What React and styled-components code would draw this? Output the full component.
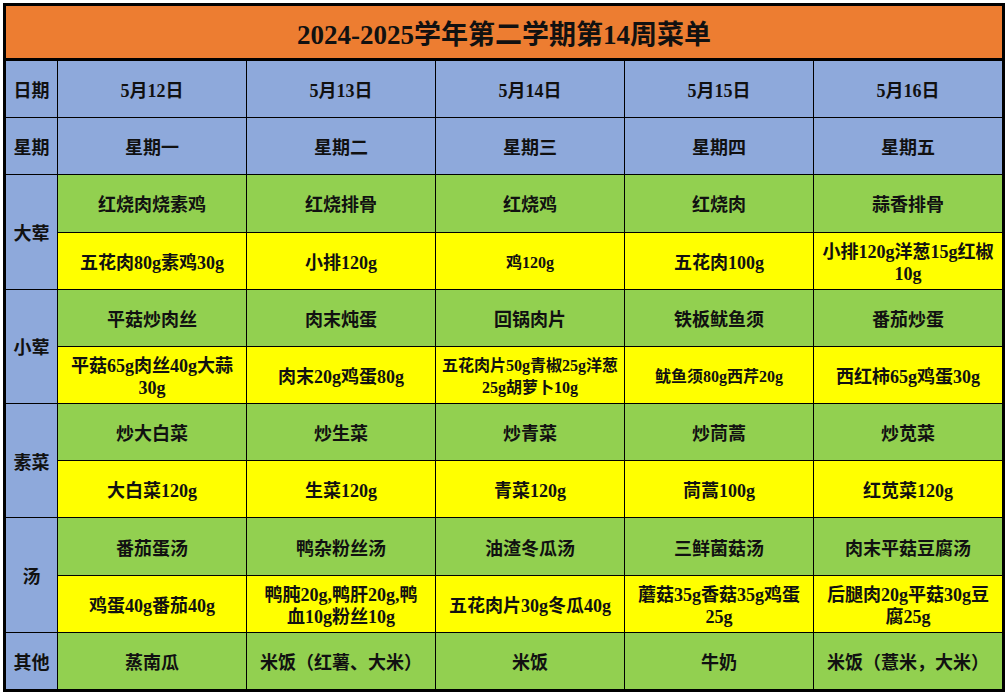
import styled, { createGlobalStyle } from "styled-components";

const GlobalStyle = createGlobalStyle`
  html, body {
    margin: 0;
    padding: 0;
    background: #ffffff;
  }
  body {
    font-family: "Liberation Serif", "Noto Sans CJK SC", serif;
  }
`;

const colors = {
  blue: "#8EA9DB",
  green: "#92D050",
  yellow: "#FFFF00",
};

const Frame = styled.div`
  box-sizing: border-box;
  width: 1002px;
  margin: 3px 0 0 3px;
  border: 3px solid #000;
  background: #000;
`;

const Title = styled.div`
  height: 52px;
  display: flex;
  align-items: center;
  justify-content: center;
  background: #ed7d31;
  border-bottom: 3px solid #000;
  font-family: "Liberation Serif", "Noto Sans CJK SC", serif;
  font-weight: 700;
  font-size: 27px;
  color: #111;
`;

const Grid = styled.div`
  display: grid;
  grid-template-columns: 51px repeat(5, 1fr);
  grid-template-rows: repeat(11, 1fr);
  gap: 1px;
  height: 628px;
  background: #000;
`;

const Cell = styled.div`
  box-sizing: border-box;
  display: flex;
  flex-direction: column;
  align-items: center;
  justify-content: center;
  padding-top: 4px;
  background: ${(p) => colors[p.$bg]};
  grid-row: ${(p) => (p.$span ? `span ${p.$span}` : "auto")};
  font-family: "Liberation Serif", "Noto Sans CJK SC", serif;
  font-weight: 700;
  font-size: ${(p) => (p.$small ? "16px" : "18px")};
  line-height: 22px;
  color: #111;
  text-align: center;
  white-space: nowrap;
  overflow: hidden;
`;

const Line = styled.span`
  display: block;
`;

const days = ["5月12日", "5月13日", "5月14日", "5月15日", "5月16日"];
const weekdays = ["星期一", "星期二", "星期三", "星期四", "星期五"];

const sections = [
  {
    label: "大荤",
    dishes: ["红烧肉烧素鸡", "红烧排骨", "红烧鸡", "红烧肉", "蒜香排骨"],
    portions: [
      { lines: ["五花肉80g素鸡30g"] },
      { lines: ["小排120g"] },
      { lines: ["鸡120g"], small: true },
      { lines: ["五花肉100g"] },
      { lines: ["小排120g洋葱15g红椒", "10g"] },
    ],
  },
  {
    label: "小荤",
    dishes: ["平菇炒肉丝", "肉末炖蛋", "回锅肉片", "铁板鱿鱼须", "番茄炒蛋"],
    portions: [
      { lines: ["平菇65g肉丝40g大蒜", "30g"] },
      { lines: ["肉末20g鸡蛋80g"] },
      { lines: ["五花肉片50g青椒25g洋葱", "25g胡萝卜10g"], small: true },
      { lines: ["鱿鱼须80g西芹20g"], small: true },
      { lines: ["西红柿65g鸡蛋30g"] },
    ],
  },
  {
    label: "素菜",
    dishes: ["炒大白菜", "炒生菜", "炒青菜", "炒茼蒿", "炒苋菜"],
    portions: [
      { lines: ["大白菜120g"] },
      { lines: ["生菜120g"] },
      { lines: ["青菜120g"] },
      { lines: ["茼蒿100g"] },
      { lines: ["红苋菜120g"] },
    ],
  },
  {
    label: "汤",
    dishes: ["番茄蛋汤", "鸭杂粉丝汤", "油渣冬瓜汤", "三鲜菌菇汤", "肉末平菇豆腐汤"],
    portions: [
      { lines: ["鸡蛋40g番茄40g"] },
      { lines: ["鸭肫20g,鸭肝20g,鸭", "血10g粉丝10g"] },
      { lines: ["五花肉片30g冬瓜40g"] },
      { lines: ["蘑菇35g香菇35g鸡蛋", "25g"] },
      { lines: ["后腿肉20g平菇30g豆", "腐25g"] },
    ],
  },
];

const others = ["蒸南瓜", "米饭（红薯、大米）", "米饭", "牛奶", "米饭（薏米，大米）"];

const App = () => {
  return (
    <>
      <GlobalStyle />
      <Frame>
        <Title>2024-2025学年第二学期第14周菜单</Title>
        <Grid>
          <Cell $bg="blue">日期</Cell>
          {days.map((d) => (
            <Cell key={d} $bg="blue">
              {d}
            </Cell>
          ))}
          <Cell $bg="blue">星期</Cell>
          {weekdays.map((w) => (
            <Cell key={w} $bg="blue">
              {w}
            </Cell>
          ))}
          {sections.map((s) => [
            <Cell key={s.label} $bg="blue" $span={2}>
              {s.label}
            </Cell>,
            ...s.dishes.map((d, i) => (
              <Cell key={s.label + "d" + i} $bg="green">
                {d}
              </Cell>
            )),
            ...s.portions.map((p, i) => (
              <Cell key={s.label + "p" + i} $bg="yellow" $small={p.small}>
                {p.lines.map((l) => (
                  <Line key={l}>{l}</Line>
                ))}
              </Cell>
            )),
          ])}
          <Cell $bg="blue">其他</Cell>
          {others.map((o, i) => (
            <Cell key={"o" + i} $bg="green">
              {o}
            </Cell>
          ))}
        </Grid>
      </Frame>
    </>
  );
};

export default App;
